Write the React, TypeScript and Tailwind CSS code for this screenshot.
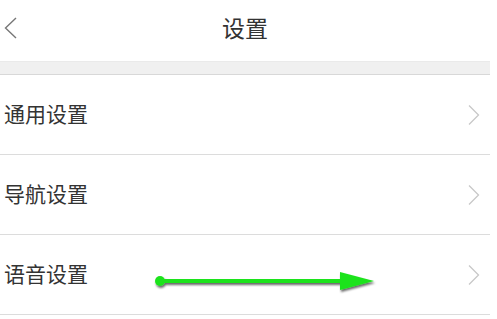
import React from "react";

const Chevron = () => (
  <svg width="14" height="22" viewBox="0 0 14 22" fill="none">
    <path d="M2 1.5 L11.5 11 L2 20.5" stroke="#c8c8c8" strokeWidth="1.3" />
  </svg>
);

const Row = ({ label }: { label: string }) => (
  <div className="flex h-[80px] items-center justify-between border-b border-[#dcdcdc] pl-[4px] pr-[9px]">
    <span className="pb-[3px] text-[21px] leading-none text-[#333333]">{label}</span>
    <Chevron />
  </div>
);

export default function App() {
  return (
    <div
      className="relative h-[319px] w-[497px] overflow-hidden bg-white"
      style={{ fontFamily: '"Noto Sans CJK SC", "Noto Sans", sans-serif' }}
    >
      <div className="w-[490px]">
        <div className="relative flex h-[61px] items-center justify-center pb-[6px]">
          <svg className="absolute left-[3px] top-[17px]" width="16" height="22" viewBox="0 0 16 22" fill="none">
            <path d="M13 1 L2.5 11 L13 21" stroke="#777777" strokeWidth="1.4" />
          </svg>
          <span className="text-[23px] leading-none text-[#333333]">设置</span>
        </div>
        <div className="h-[14px] border-t border-b border-t-[#eaeaea] border-b-[#d8d8d8] bg-[#f0f0f0]" />
        <Row label="通用设置" />
        <Row label="导航设置" />
        <Row label="语音设置" />
      </div>
      <svg className="absolute left-[150px] top-[268px]" width="235" height="30" viewBox="0 0 235 30">
        <defs>
          <filter id="sh" x="-10%" y="-50%" width="120%" height="200%">
            <feDropShadow dx="1" dy="2" stdDeviation="1.2" floodColor="#000" floodOpacity="0.6" />
          </filter>
        </defs>
        <g filter="url(#sh)">
          <circle cx="10" cy="13" r="5" fill="#1fe31f" />
          <rect x="10" y="11" width="182" height="4" fill="#1fe31f" />
          <path d="M190 4 L224 13 L190 22 Z" fill="#1fe31f" />
        </g>
      </svg>
    </div>
  );
}
